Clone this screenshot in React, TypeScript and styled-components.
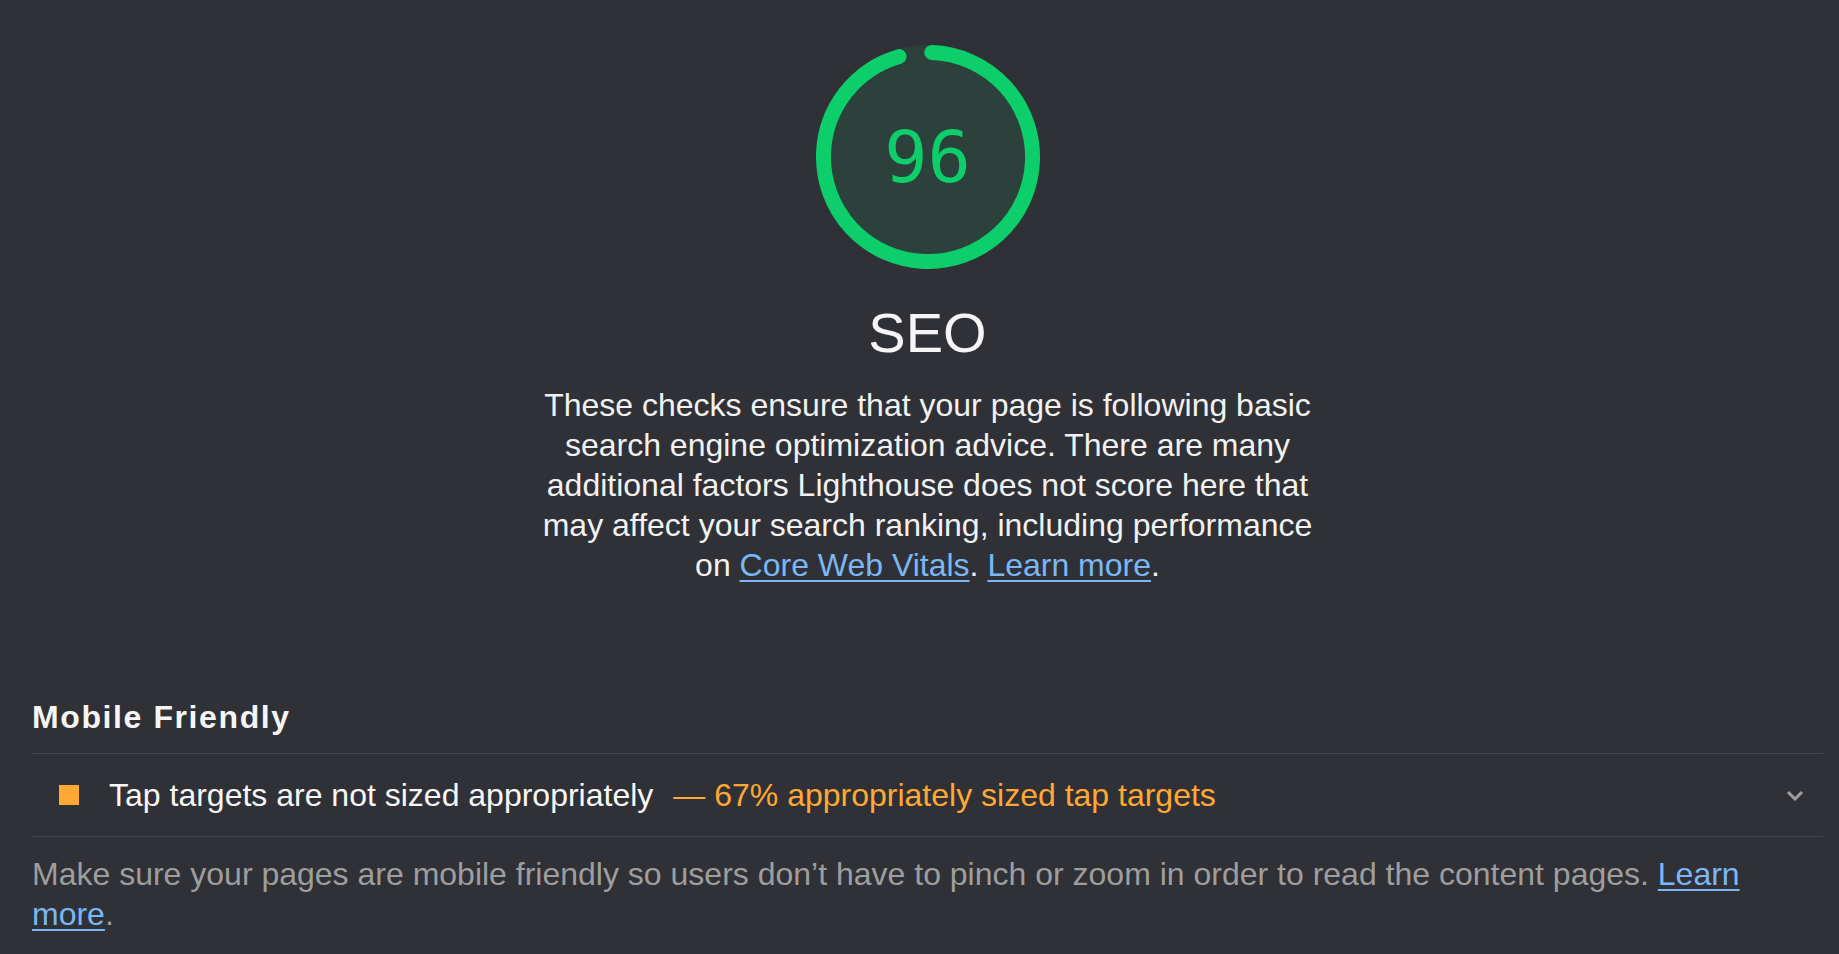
import React from 'react'
import styled, { createGlobalStyle } from 'styled-components'

const GlobalStyle = createGlobalStyle`
  html, body {
    margin: 0;
    padding: 0;
    background: #303136;
  }
  body {
    font-family: "Liberation Sans", Arial, sans-serif;
    color: #f5f5f5;
  }
`

const RADIUS = 56
const STROKE = 8
const CIRC = 2 * Math.PI * RADIUS

const ScoreGauge = ({ score }: { score: number }) => {
  // same trick as lighthouse: shift the arc so the round caps leave a gap at the top
  const adjust = (0.25 * STROKE) / CIRC
  const arcLength = Math.max(0, score * CIRC - 2 * adjust * CIRC)
  return (
    <GaugeBox>
      <svg viewBox="0 0 120 120" width="224" height="224">
        <circle cx="60" cy="60" r={RADIUS} strokeWidth={STROKE} fill="#0cce6b" stroke="#0cce6b" opacity="0.1" />
        <circle
          cx="60"
          cy="60"
          r={RADIUS}
          strokeWidth={STROKE}
          fill="none"
          stroke="#0cce6b"
          strokeLinecap="round"
          strokeDasharray={`${arcLength} ${CIRC}`}
          transform={`rotate(${adjust * 360 - 90} 60 60)`}
        />
      </svg>
      <Percentage>{Math.round(score * 100)}</Percentage>
    </GaugeBox>
  )
}

const App = () => {
  return (
    <>
      <GlobalStyle />
      <Page>
        <Header>
          <ScoreGauge score={0.96} />
          <Label>SEO</Label>
          <Description>
            These checks ensure that your page is following basic search engine optimization advice. There are many
            additional factors Lighthouse does not score here that may affect your search ranking, including performance
            on <Link href="#">Core Web Vitals</Link>. <Link href="#">Learn more</Link>.
          </Description>
        </Header>

        <Group>
          <GroupTitle>Mobile Friendly</GroupTitle>
          <AuditRow>
            <AverageIcon />
            <AuditTitle>Tap targets are not sized appropriately</AuditTitle>
            <DisplayValue>— 67% appropriately sized tap targets</DisplayValue>
            <Chevron viewBox="0 0 18 11" width="18" height="11">
              <polyline points="2,2 9,9 16,2" fill="none" stroke="#9e9e9e" strokeWidth="3" />
            </Chevron>
          </AuditRow>
          <GroupDescription>
            Make sure your pages are mobile friendly so users don’t have to pinch or zoom in order to read the content
            pages. <Link href="#">Learn more</Link>.
          </GroupDescription>
        </Group>
      </Page>
    </>
  )
}

export default App

const Page = styled.div`
  padding: 0 16px 60px 32px;
  min-height: 954px;
  box-sizing: border-box;
`

const Header = styled.div`
  display: flex;
  flex-direction: column;
  align-items: center;
  padding-top: 45px;
`

const GaugeBox = styled.div`
  position: relative;
  width: 224px;
  height: 224px;
  svg {
    display: block;
  }
`

const Percentage = styled.div`
  position: absolute;
  inset: 0;
  display: flex;
  align-items: center;
  justify-content: center;
  font-family: "DejaVu Sans Mono", "Liberation Mono", monospace;
  font-size: 72px;
  color: #0cce6b;
  line-height: 1;
`

const Label = styled.div`
  margin-top: 32px;
  font-size: 56px;
  line-height: 64px;
  color: #f5f5f5;
`

const Description = styled.p`
  margin: 20px auto 0;
  max-width: 790px;
  text-align: center;
  font-size: 32px;
  line-height: 40px;
  color: #f1f1f1;
`

const Link = styled.a`
  color: #7ab8f5;
  text-decoration: underline;
  text-underline-offset: 4px;
  text-decoration-thickness: 2px;
`

const Group = styled.section`
  margin-top: 112px;
`

const GroupTitle = styled.h2`
  margin: 0;
  padding-bottom: 16px;
  font-size: 32px;
  line-height: 40px;
  font-weight: 700;
  letter-spacing: 1.6px;
  color: #f5f5f5;
  border-bottom: 1px solid #46474b;
`

const AuditRow = styled.div`
  display: flex;
  align-items: center;
  padding: 21px 0;
  border-bottom: 1px solid #46474b;
`

const AverageIcon = styled.span`
  flex: none;
  width: 20px;
  height: 20px;
  margin-left: 27px;
  margin-right: 30px;
  background: #ffa834;
`

const AuditTitle = styled.span`
  font-size: 32px;
  line-height: 40px;
  color: #f7f7f7;
`

const DisplayValue = styled.span`
  margin-left: 20px;
  font-size: 32px;
  line-height: 40px;
  color: #ffa834;
`

const Chevron = styled.svg`
  margin-left: auto;
  margin-right: 19px;
  flex: none;
`

const GroupDescription = styled.p`
  margin: 17px 0 0;
  font-size: 32px;
  line-height: 40px;
  color: #9e9e9e;
`
